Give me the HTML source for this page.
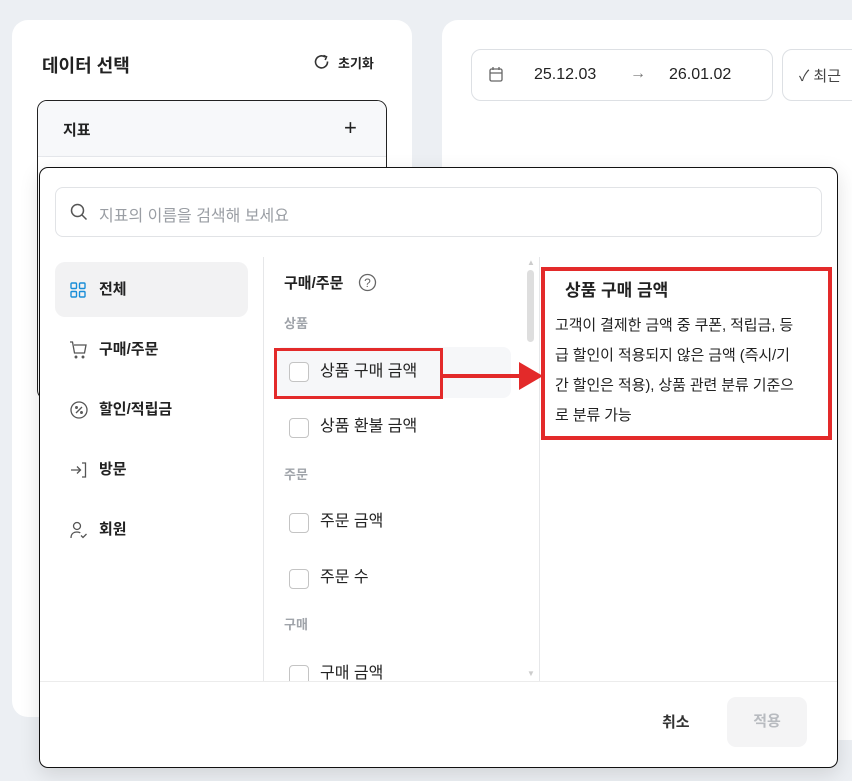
<!DOCTYPE html>
<html><head><meta charset="utf-8"><style>
*{box-sizing:border-box;margin:0;padding:0}
body{width:852px;height:781px;background:#eceff3;font-family:"Liberation Sans","Noto Sans CJK KR",sans-serif;position:relative;overflow:hidden;color:#222}
.abs{position:absolute}
.card{background:#fff;border-radius:16px}
.cb{position:absolute;left:289px;width:20px;height:20px;border:1.3px solid #c4c4c4;border-radius:4px;background:#fff}
.it{position:absolute;left:320px;font-size:16px;color:#222;line-height:20px}
.lbl{position:absolute;left:284px;font-size:13px;color:#a0a4aa;font-weight:bold}
.nav{position:absolute;left:99px;font-size:15px;font-weight:bold;line-height:20px}
.ic{position:absolute;left:69px}
</style></head><body>
<div class="abs card" style="left:12px;top:20px;width:400px;height:697px"></div>
<div class="abs card" style="left:442px;top:20px;width:430px;height:720px;border-radius:16px 0 0 16px"></div>
<div class="abs" style="left:42px;top:52px;font-size:18px;font-weight:bold">데이터 선택</div>
<svg class="abs" style="left:313px;top:53px" width="18" height="18" viewBox="0 0 18 18"><path d="M14.5 8.5A6 6 0 1 1 12 4" fill="none" stroke="#333" stroke-width="1.6"/><path d="M10.5 2.5L13.5 3.8 12.2 7" fill="none" stroke="#333" stroke-width="1.6"/></svg>
<div class="abs" style="left:338px;top:53px;font-size:13px;font-weight:bold">초기화</div>
<div class="abs" style="left:37px;top:100px;width:350px;height:300px;border:1px solid #222;border-radius:10px;overflow:hidden"><div style="height:56px;background:#f7f8fa;border-bottom:1px solid #e5e7eb"></div></div>
<div class="abs" style="left:63px;top:119px;font-size:15px;font-weight:bold">지표</div>
<div class="abs" style="left:344px;top:115px;font-size:22px;font-weight:300">+</div>
<div class="abs" style="left:471px;top:49px;width:302px;height:52px;border:1px solid #dde0e4;border-radius:10px"></div>
<svg class="abs" style="left:488px;top:66px" width="16" height="17" viewBox="0 0 16 17"><rect x="2" y="3" width="12" height="12" rx="1.5" fill="none" stroke="#666" stroke-width="1.3"/><path d="M2 7h12M5 1v3M11 1v3" stroke="#666" stroke-width="1.3"/></svg>
<div class="abs" style="left:534px;top:66px;font-size:16px">25.12.03</div>
<div class="abs" style="left:630px;top:65px;font-size:16px;color:#777">→</div>
<div class="abs" style="left:669px;top:66px;font-size:16px">26.01.02</div>
<div class="abs" style="left:782px;top:49px;width:100px;height:52px;border:1px solid #dde0e4;border-radius:10px"></div>
<div class="abs" style="left:799px;top:65px;font-size:15px;color:#444">✓ 최근</div>

<div class="abs" style="left:39px;top:167px;width:799px;height:601px;background:#fff;border:1.5px solid #111;border-radius:9px;box-shadow:0 6px 20px rgba(0,0,0,.12)"></div>
<div class="abs" style="left:55px;top:187px;width:767px;height:50px;border:1px solid #e1e3e6;border-radius:8px"></div>
<svg class="abs" style="left:69px;top:202px" width="20" height="20" viewBox="0 0 20 20"><circle cx="8.5" cy="8.5" r="6" fill="none" stroke="#555" stroke-width="1.5"/><path d="M13 13l4.5 4.5" stroke="#555" stroke-width="1.5"/></svg>
<div class="abs" style="left:99px;top:202px;font-size:16px;color:#9a9ea4">지표의 이름을 검색해 보세요</div>

<div class="abs" style="left:55px;top:262px;width:193px;height:55px;background:#f2f2f3;border-radius:10px"></div>
<svg class="ic" style="top:281px" width="18" height="18" viewBox="0 0 18 18" fill="none" stroke="#1a8ed8" stroke-width="1.4"><rect x="2" y="2" width="5.5" height="5.5" rx="1"/><rect x="10.5" y="2" width="5.5" height="5.5" rx="1"/><rect x="2" y="10.5" width="5.5" height="5.5" rx="1"/><rect x="10.5" y="10.5" width="5.5" height="5.5" rx="1"/></svg>
<div class="nav" style="top:280px">전체</div>
<svg class="ic" style="top:340px" width="20" height="20" viewBox="0 0 20 20" fill="none" stroke="#555" stroke-width="1.3"><path d="M1 2h2.5l2 11h10l1.5-8H5"/><circle cx="7" cy="17" r=".8"/><circle cx="14" cy="17" r=".8"/></svg>
<div class="nav" style="top:340px">구매/주문</div>
<svg class="ic" style="top:400px" width="20" height="20" viewBox="0 0 20 20" fill="none" stroke="#555" stroke-width="1.3"><circle cx="10" cy="10" r="8"/><path d="M7 13l6-6"/><circle cx="7.5" cy="7.5" r=".8"/><circle cx="12.5" cy="12.5" r=".8"/></svg>
<div class="nav" style="top:400px">할인/적립금</div>
<svg class="ic" style="top:460px" width="20" height="20" viewBox="0 0 20 20" fill="none" stroke="#555" stroke-width="1.3"><path d="M2 10h9M8 6.5l3.5 3.5L8 13.5M13 3h3.5v14H13"/></svg>
<div class="nav" style="top:460px">방문</div>
<svg class="ic" style="top:520px" width="20" height="20" viewBox="0 0 20 20" fill="none" stroke="#555" stroke-width="1.3"><circle cx="8" cy="6" r="3.5"/><path d="M2 18c0-4 2.5-6 6-6 1.5 0 2.5.3 3.3.9M12 15.5l2 2 3.5-3.5"/></svg>
<div class="nav" style="top:520px">회원</div>

<div class="abs" style="left:263px;top:257px;width:1px;height:424px;background:#e6e7e9"></div>
<div class="abs" style="left:539px;top:257px;width:1px;height:424px;background:#e6e7e9"></div>
<div class="abs" style="left:527px;top:270px;width:7px;height:72px;background:#dedede;border-radius:4px"></div>
<div class="abs" style="left:527px;top:258px;font-size:8px;color:#ccc">▲</div>
<div class="abs" style="left:527px;top:669px;font-size:8px;color:#ccc">▼</div>

<div class="abs" style="left:284px;top:272px;font-size:15px;font-weight:bold">구매/주문</div>
<svg class="abs" style="left:358px;top:273px" width="19" height="19" viewBox="0 0 19 19"><circle cx="9.5" cy="9.5" r="8" fill="none" stroke="#666" stroke-width="1.3"/><text x="9.5" y="14" font-size="12" text-anchor="middle" fill="#666" font-family="Liberation Sans">?</text></svg>
<div class="lbl" style="top:313px">상품</div>
<div class="abs" style="left:275px;top:347px;width:236px;height:51px;background:#f6f7f9;border-radius:8px"></div>
<div class="cb" style="top:362px"></div><div class="it" style="top:362px">상품 구매 금액</div>
<div class="cb" style="top:418px"></div><div class="it" style="top:417px">상품 환불 금액</div>
<div class="lbl" style="top:464px">주문</div>
<div class="cb" style="top:513px"></div><div class="it" style="top:512px">주문 금액</div>
<div class="cb" style="top:569px"></div><div class="it" style="top:568px">주문 수</div>
<div class="lbl" style="top:614px">구매</div>
<div class="abs" style="left:270px;top:655px;width:260px;height:26px;overflow:hidden"><div class="cb" style="left:19px;top:10px"></div><div class="it" style="left:50px;top:9px">구매 금액</div></div>

<div class="abs" style="left:274px;top:348px;width:169px;height:51px;border:3px solid #e32a2a"></div>
<div class="abs" style="left:443px;top:374px;width:80px;height:4px;background:#e32a2a"></div>
<svg class="abs" style="left:519px;top:362px" width="24" height="28" viewBox="0 0 24 28"><path d="M0 0L24 14 0 28z" fill="#e32a2a"/></svg>
<div class="abs" style="left:541px;top:267px;width:291px;height:173px;border:4px solid #e32a2a;background:#fff"></div>
<div class="abs" style="left:565px;top:276px;font-size:17px;font-weight:bold">상품 구매 금액</div>
<div class="abs" style="left:555px;top:311px;font-size:15px;line-height:30px;color:#222;white-space:nowrap;letter-spacing:-0.1px">고객이 결제한 금액 중 쿠폰, 적립금, 등<br>급 할인이 적용되지 않은 금액 (즉시/기<br>간 할인은 적용), 상품 관련 분류 기준으<br>로 분류 가능</div>

<div class="abs" style="left:40px;top:681px;width:797px;height:1px;background:#ececec"></div>
<div class="abs" style="left:662px;top:711px;font-size:15px;font-weight:bold;color:#333">취소</div>
<div class="abs" style="left:727px;top:697px;width:80px;height:50px;background:#f4f4f5;border-radius:9px;color:#b8bbc0;font-size:15px;font-weight:bold;text-align:center;line-height:50px">적용</div>
</body></html>
